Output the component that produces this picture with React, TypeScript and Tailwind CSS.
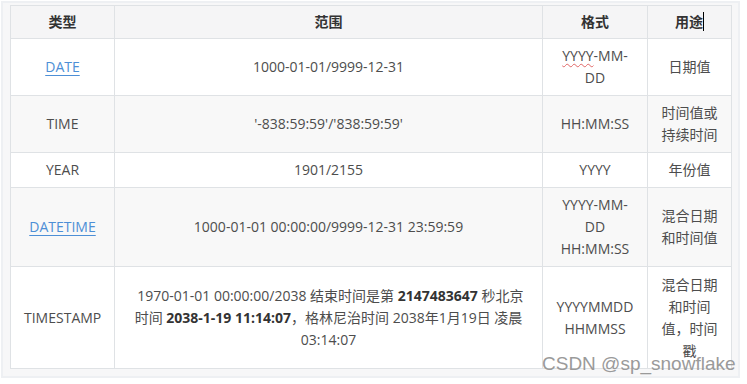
import React from "react";

const font = "font-['Open_Sans','Noto_Sans_CJK_SC',sans-serif]";

function Td({ children, className = "" }: { children?: React.ReactNode; className?: string }) {
  return (
    <td className={`border border-[#dfe2e5] px-[13px] py-[6px] text-center align-middle ${className}`}>
      {children}
    </td>
  );
}

function Link({ children }: { children: React.ReactNode }) {
  return <span className="text-[#4d8fd6] underline underline-offset-[3px] decoration-[#4d8fd6]">{children}</span>;
}

export default function App() {
  return (
    <div className={`relative w-[747px] h-[384px] bg-white ${font}`}>
      <div className="absolute left-[1px] top-[1px] w-[739px] h-[377px] bg-[#eef0f3] p-[2px]">
        <div className="w-full h-full bg-[#f7f7f8] pl-[7px] pt-[2px]">
          <table className="table-fixed border-collapse w-[721px] text-[14px] leading-[22px] text-[#4d4d4d] bg-white">
            <colgroup>
              <col className="w-[104px]" />
              <col className="w-[428px]" />
              <col className="w-[105px]" />
              <col className="w-[84px]" />
            </colgroup>
            <thead>
              <tr className="bg-[#f5f5f6] h-[33px]">
                <th className="border border-[#dfe2e5] px-[13px] py-[5px] font-bold text-[#333]">类型</th>
                <th className="border border-[#dfe2e5] px-[13px] py-[5px] font-bold text-[#333]">范围</th>
                <th className="border border-[#dfe2e5] px-[13px] py-[5px] font-bold text-[#333]">格式</th>
                <th className="border border-[#dfe2e5] px-[13px] py-[5px] font-bold text-[#333]">
                  用途<span className="inline-block w-px h-[19px] bg-black align-[-4px]" />
                </th>
              </tr>
            </thead>
            <tbody>
              <tr className="bg-white h-[57px]">
                <Td><Link>DATE</Link></Td>
                <Td>1000-01-01/9999-12-31</Td>
                <Td>
                  <span className="underline decoration-wavy decoration-[#e06666] decoration-1 underline-offset-[2px]">YYYY</span>-MM-DD
                </Td>
                <Td>日期值</Td>
              </tr>
              <tr className="bg-[#f8f8f8] h-[57px]">
                <Td>TIME</Td>
                <Td>'-838:59:59'/'838:59:59'</Td>
                <Td>HH:MM:SS</Td>
                <Td>时间值或持续时间</Td>
              </tr>
              <tr className="bg-white h-[34px]">
                <Td>YEAR</Td>
                <Td>1901/2155</Td>
                <Td>YYYY</Td>
                <Td>年份值</Td>
              </tr>
              <tr className="bg-[#f8f8f8] h-[79px]">
                <Td><Link>DATETIME</Link></Td>
                <Td>1000-01-01 00:00:00/9999-12-31 23:59:59</Td>
                <Td>YYYY-MM-DD HH:MM:SS</Td>
                <Td>混合日期和时间值</Td>
              </tr>
              <tr className="bg-white h-[102px]">
                <Td>TIMESTAMP</Td>
                <Td>
                  &nbsp;1970-01-01 00:00:00/2038 结束时间是第 <b className="text-[#333]">2147483647</b> 秒北京时间{" "}
                  <b className="text-[#333]">2038-1-19 11:14:07</b>，格林尼治时间 2038年1月19日 凌晨 03:14:07
                </Td>
                <Td>YYYYMMDD HHMMSS</Td>
                <Td>混合日期和时间值，时间戳</Td>
              </tr>
            </tbody>
          </table>
        </div>
      </div>
      <div className="absolute left-[542px] top-[353px] font-['Liberation_Sans',Arial,sans-serif] text-[19px] leading-[22px] text-[#9a9a9a] whitespace-nowrap">
        CSDN @sp_snowflake
      </div>
    </div>
  );
}
